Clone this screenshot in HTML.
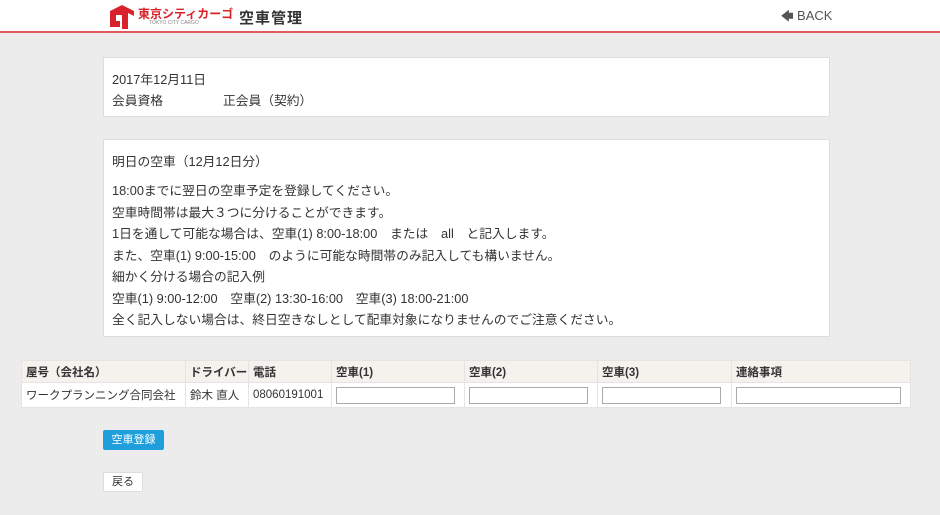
<!DOCTYPE html>
<html><head><meta charset="utf-8"><style>
*{box-sizing:border-box;margin:0;padding:0}
body{width:940px;height:515px;background:#ececec;font-family:"Liberation Sans","Noto Sans CJK JP",sans-serif;color:#333;font-size:12.75px;position:relative;overflow:hidden}
.hdr{position:absolute;left:0;top:0;width:940px;height:33px;background:#fff;border-bottom:2px solid #e0595e}
.box{position:absolute;left:103px;width:727px;background:#fff;border:1px solid #ddd}
.t{position:absolute;white-space:nowrap}
table{position:absolute;left:21px;top:360px;width:890px;border-collapse:collapse;background:#fff;table-layout:fixed}
td,th{border:1px solid #e4e4e4;text-align:left;padding:0 4px;font-size:11.5px;white-space:nowrap;overflow:hidden}
th{background:#f5f2ed;height:22px;font-weight:bold}
td{height:25px}
input{width:119px;height:17px;border:1px solid #aaa;display:block}
</style></head><body>
<div class="hdr">
<svg style="position:absolute;left:108px;top:3px" width="28" height="28" viewBox="0 0 28 28"><path d="M2 8 L14 2 L26 8 L26 13 L20 10 L20 26 L14 26 L14 12 L8 12 L8 18 L12 18 L12 24 L2 24Z" fill="#d9232a"/></svg>
<div class="t" style="left:138px;top:5px;color:#d9232a;font-weight:bold;font-size:12px">東京シティカーゴ</div>
<div class="t" style="left:149px;top:20px;color:#888;font-size:5px">TOKYO CITY CARGO</div>
<div class="t" style="left:239px;top:7px;font-size:15px;font-weight:bold;letter-spacing:1px">空車管理</div>
<div class="t" style="left:781px;top:7px;font-size:13px;color:#555"><b style="font-size:12px">&#x1F844;</b> BACK</div>
</div>
<div class="box" style="top:57px;height:60px">
<div class="t" style="left:8px;top:11px">2017年12月11日</div>
<div class="t" style="left:8px;top:32px">会員資格</div>
<div class="t" style="left:119px;top:32px">正会員（契約）</div>
</div>
<div class="box" style="top:139px;height:198px">
<div class="t" style="left:8px;top:11px">明日の空車（12月12日分）</div>
<div class="t" style="left:8px;top:40px">18:00までに翌日の空車予定を登録してください。</div>
<div class="t" style="left:8px;top:62px">空車時間帯は最大３つに分けることができます。</div>
<div class="t" style="left:8px;top:83px">1日を通して可能な場合は、空車(1) 8:00-18:00　または　all　と記入します。</div>
<div class="t" style="left:8px;top:105px">また、空車(1) 9:00-15:00　のように可能な時間帯のみ記入しても構いません。</div>
<div class="t" style="left:8px;top:126px">細かく分ける場合の記入例</div>
<div class="t" style="left:8px;top:148px">空車(1) 9:00-12:00　空車(2) 13:30-16:00　空車(3) 18:00-21:00</div>
<div class="t" style="left:8px;top:169px">全く記入しない場合は、終日空きなしとして配車対象になりませんのでご注意ください。</div>
</div>
<table>
<colgroup><col style="width:164px"><col style="width:63px"><col style="width:83px"><col style="width:133px"><col style="width:133px"><col style="width:134px"><col></colgroup>
<tr><th>屋号（会社名）</th><th>ドライバー</th><th>電話</th><th>空車(1)</th><th>空車(2)</th><th>空車(3)</th><th>連絡事項</th></tr>
<tr><td>ワークプランニング合同会社</td><td>鈴木 直人</td><td>08060191001</td><td><input></td><td><input></td><td><input></td><td><input style="width:165px"></td></tr>
</table>
<div class="t" style="left:103px;top:430px;width:61px;height:20px;background:#1e9fdc;color:#fff;border-radius:2px;text-align:center;line-height:20px;font-size:11px">空車登録</div>
<div class="t" style="left:103px;top:472px;width:40px;height:20px;background:#fff;border:1px solid #ddd;text-align:center;line-height:18px;font-size:11px">戻る</div>
</body></html>
